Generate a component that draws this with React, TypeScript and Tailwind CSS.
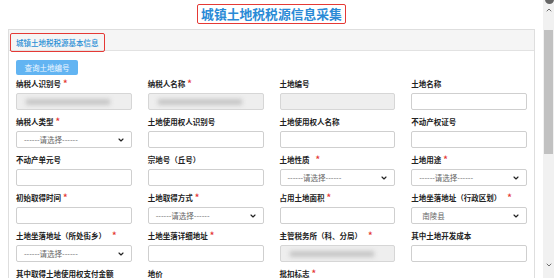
import { ChevronDown, ChevronUp } from 'lucide-react';

type Field = {
  label: string;
  required?: boolean;
  gap?: boolean;
  kind: 'input' | 'select' | 'disabled' | 'blur';
  value?: string;
};

const fields: Field[] = [
  { label: '纳税人识别号', required: true, kind: 'blur' },
  { label: '纳税人名称', required: true, kind: 'blur' },
  { label: '土地编号', kind: 'disabled' },
  { label: '土地名称', kind: 'input' },
  { label: '纳税人类型', required: true, kind: 'select' },
  { label: '土地使用权人识别号', kind: 'input' },
  { label: '土地使用权人名称', kind: 'input' },
  { label: '不动产权证号', kind: 'input' },
  { label: '不动产单元号', kind: 'input' },
  { label: '宗地号（丘号）', kind: 'input' },
  { label: '土地性质', required: true, gap: true, kind: 'select' },
  { label: '土地用途', required: true, kind: 'select' },
  { label: '初始取得时间', required: true, kind: 'input' },
  { label: '土地取得方式', required: true, kind: 'select' },
  { label: '占用土地面积', required: true, kind: 'input' },
  { label: '土地坐落地址（行政区划）', required: true, gap: true, kind: 'select', value: '南陵县' },
  { label: '土地坐落地址（所处街乡）', required: true, gap: true, kind: 'select' },
  { label: '土地坐落详细地址', required: true, kind: 'input' },
  { label: '主管税务所（科、分局）', required: true, gap: true, kind: 'blur' },
  { label: '其中土地开发成本', kind: 'input' },
  { label: '其中取得土地使用权支付金额', kind: 'input' },
  { label: '地价', kind: 'input' },
  { label: '批扣标志', required: true, kind: 'select' },
];

function Control({ f }: { f: Field }) {
  if (f.kind === 'select') {
    return (
      <div className="h-[17px] border border-[#cfcfcf] rounded-[2px] bg-white flex items-center justify-between pl-[7px] pr-[6px] text-[#666]">
        <span className={f.value ? 'pl-[3px]' : ''}>{f.value ?? '------请选择------'}</span>
        <ChevronDown size={8} strokeWidth={3.5} className="text-[#222]" />
      </div>
    );
  }
  if (f.kind === 'blur' || f.kind === 'disabled') {
    return (
      <div className="h-[17px] border border-[#d6d6d6] rounded-[2px] bg-[#eeeeee] flex items-center px-[9px] overflow-hidden">
        {f.kind === 'blur' && <div className="h-[6px] w-[84px] bg-[#c6c6c6] blur-[2px]" />}
      </div>
    );
  }
  return <div className="h-[17px] border border-[#cfcfcf] rounded-[2px] bg-white" />;
}

export default function App() {
  return (
    <div
      className="h-[278px] w-[554px] overflow-hidden bg-white flex text-[7.5px]"
      style={{ fontFamily: '"Noto Sans CJK SC", "Noto Sans", sans-serif' }}
    >
      {/* Page */}
      <div className="flex-1 min-w-0">
        <div className="flex justify-center pt-[4px] mb-[5px]">
          <div className="h-[20px] px-[3px] border-[1.5px] border-[#e53935] rounded-[2px] flex items-center text-[12.8px] font-bold text-[#2a8ad6] leading-none">
            城镇土地税税源信息采集
          </div>
        </div>

        <div className="mx-[8px] border border-[#dedede] h-[260px]">
          {/* Panel header */}
          <div className="h-[21px] bg-[#f5f5f5] border-b border-[#e2e2e2] flex items-end pl-[1px]">
            <span className="relative z-10 -mb-[2px] h-[19px] border-[1.5px] border-[#e53935] rounded-[2px] px-[5px] flex items-center text-[#2a8fd6] font-medium">
              城镇土地税税源基本信息
            </span>
          </div>

          <div className="px-[7px] pt-[9px]">
            <button className="h-[15px] w-[62px] bg-[#62b4f2] text-[#eef6ff] rounded-[2px] mb-[4px]">
              查询土地编号
            </button>

            <div className="grid grid-cols-4 gap-x-[16px] gap-y-[7px]">
              {fields.map((f) => (
                <div key={f.label}>
                  <div className="leading-[10px] mb-[4px] text-[#222] font-semibold whitespace-nowrap">
                    {f.label}
                    {f.required && (
                      <span className={`text-[#e53935] text-[9px] leading-none ${f.gap ? 'ml-[6px]' : 'ml-[2px]'}`}>*</span>
                    )}
                  </div>
                  <Control f={f} />
                </div>
              ))}
            </div>
          </div>
        </div>
      </div>

      {/* Scrollbar */}
      <div className="w-[11px] bg-[#f1f1f1] flex flex-col items-center relative">
        <div className="absolute -top-[5px] left-[2px] w-[9px] h-[9px] rounded-full bg-[#666]" />
        <ChevronUp size={8} strokeWidth={2.5} className="text-[#555] mt-[6px]" />
        <div className="w-[9px] h-[124px] bg-[#c1c1c1] mt-[16px]" />
        <div className="flex-1" />
        <ChevronDown size={8} strokeWidth={2.5} className="text-[#555] mb-[9px]" />
      </div>
    </div>
  );
}
